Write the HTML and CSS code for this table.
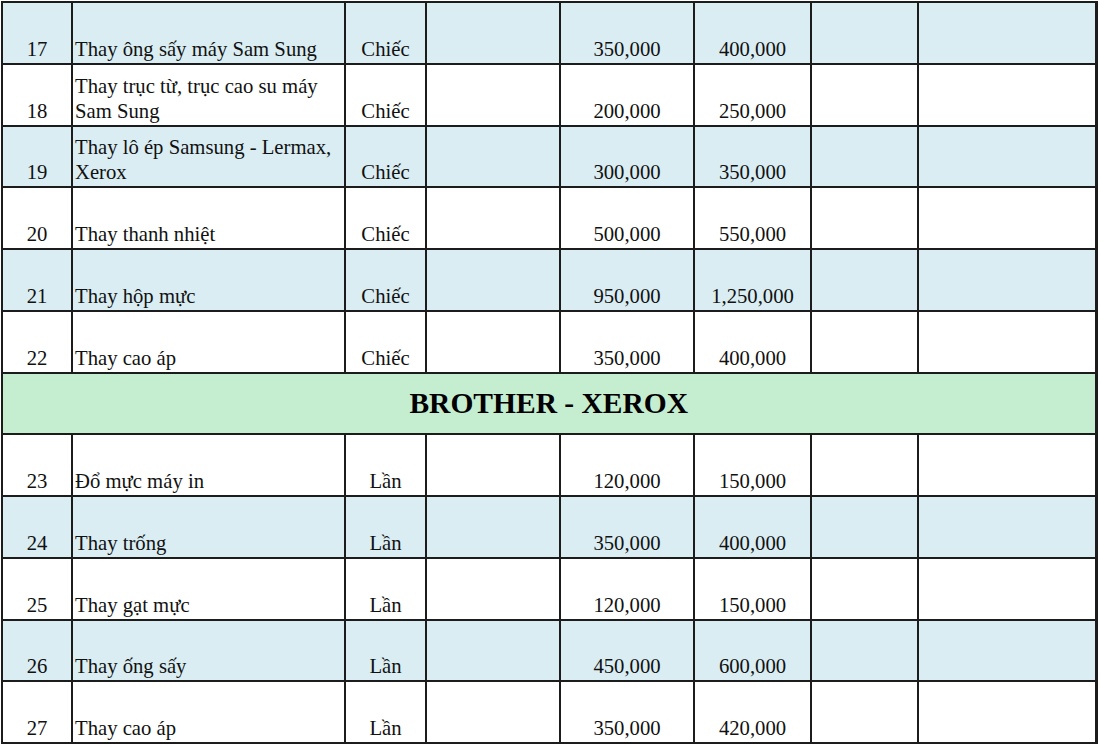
FILE: index.html
```html
<!DOCTYPE html>
<html lang="vi">
<head>
<meta charset="utf-8">
<title>Bảng giá</title>
<link rel="stylesheet" href="styles.css">
</head>
<body>
<table class="price-table">
  <colgroup>
    <col class="c-no"><col class="c-name"><col class="c-unit"><col class="c-empty"><col class="c-price"><col class="c-price2"><col class="c-x1"><col class="c-x2">
  </colgroup>
  <tbody>
    <tr class="blue"><td class="no">17</td><td class="name">Thay ông sấy máy Sam Sung</td><td class="unit">Chiếc</td><td></td><td class="price">350,000</td><td class="price">400,000</td><td></td><td></td></tr>
    <tr><td class="no">18</td><td class="name">Thay trục từ, trục cao su máy Sam Sung</td><td class="unit">Chiếc</td><td></td><td class="price">200,000</td><td class="price">250,000</td><td></td><td></td></tr>
    <tr class="blue"><td class="no">19</td><td class="name">Thay lô ép Samsung - Lermax, Xerox</td><td class="unit">Chiếc</td><td></td><td class="price">300,000</td><td class="price">350,000</td><td></td><td></td></tr>
    <tr><td class="no">20</td><td class="name">Thay thanh nhiệt</td><td class="unit">Chiếc</td><td></td><td class="price">500,000</td><td class="price">550,000</td><td></td><td></td></tr>
    <tr class="blue"><td class="no">21</td><td class="name">Thay hộp mực</td><td class="unit">Chiếc</td><td></td><td class="price">950,000</td><td class="price">1,250,000</td><td></td><td></td></tr>
    <tr><td class="no">22</td><td class="name">Thay cao áp</td><td class="unit">Chiếc</td><td></td><td class="price">350,000</td><td class="price">400,000</td><td></td><td></td></tr>
    <tr class="section"><td colspan="8">BROTHER - XEROX</td></tr>
    <tr><td class="no">23</td><td class="name">Đổ mực máy in</td><td class="unit">Lần</td><td></td><td class="price">120,000</td><td class="price">150,000</td><td></td><td></td></tr>
    <tr class="blue"><td class="no">24</td><td class="name">Thay trống</td><td class="unit">Lần</td><td></td><td class="price">350,000</td><td class="price">400,000</td><td></td><td></td></tr>
    <tr><td class="no">25</td><td class="name">Thay gạt mực</td><td class="unit">Lần</td><td></td><td class="price">120,000</td><td class="price">150,000</td><td></td><td></td></tr>
    <tr class="blue"><td class="no">26</td><td class="name">Thay ống sấy</td><td class="unit">Lần</td><td></td><td class="price">450,000</td><td class="price">600,000</td><td></td><td></td></tr>
    <tr><td class="no">27</td><td class="name">Thay cao áp</td><td class="unit">Lần</td><td></td><td class="price">350,000</td><td class="price">420,000</td><td></td><td></td></tr>
  </tbody>
</table>
</body>
</html>
```
FILE: styles.css
```css
html, body {
  margin: 0;
  padding: 0;
  background: #ffffff;
}

body {
  padding: 1px 0 0 1px;
}

.price-table {
  border-collapse: collapse;
  table-layout: fixed;
  width: 1096px;
  font-family: "Liberation Serif", Tinos, "Times New Roman", serif;
  font-size: 20.7px;
  color: #111111;
  border: 2px solid #1c1c1c;
  border-right-width: 3px;
}

.c-no { width: 70px; }
.c-name { width: 273px; }
.c-unit { width: 81px; }
.c-empty { width: 134px; }
.c-price { width: 134px; }
.c-price2 { width: 117px; }
.c-x1 { width: 107px; }
.c-x2 { width: 178px; }

.price-table td {
  border: 2px solid #1c1c1c;
  height: 58.75px;
  padding: 0 3px 1px 3px;
  vertical-align: bottom;
  line-height: 25px;
}

.price-table tr.blue td {
  background: #daedf3;
}

.price-table td.no {
  text-align: center;
}

.price-table td.name {
  text-align: left;
  padding-left: 2px;
}

.price-table td.unit,
.price-table td.price {
  text-align: center;
}

.price-table tr.section td {
  height: 59.75px;
  background: #c5edcf;
  text-align: center;
  vertical-align: middle;
  font-weight: bold;
  font-size: 29.5px;
  color: #000000;
  padding: 0;
}
```
